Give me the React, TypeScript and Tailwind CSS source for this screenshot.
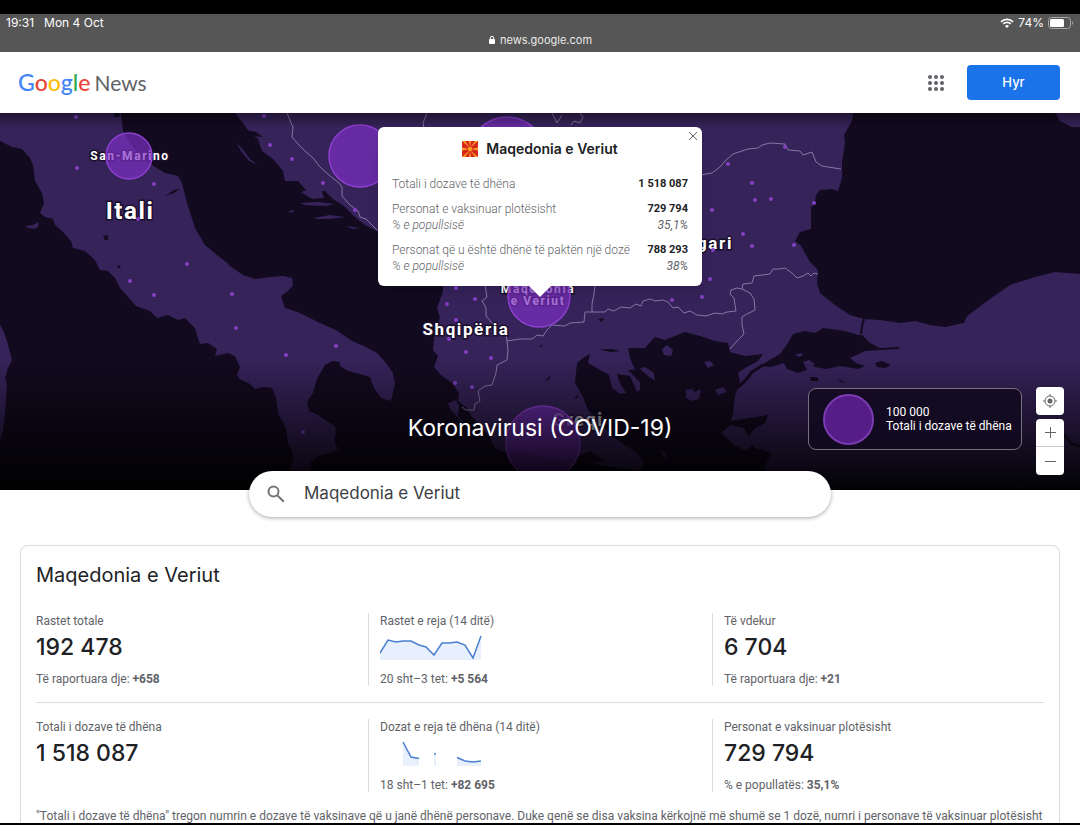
import { useState } from "react";

const LAND = "#36235a";
const SEA = "#120a1f";

const italy =
  "0,0 121,0 123,18 130,30 142,45 155,54 165,60 178,63 182,70 187,90 195,115 205,132 217,142 226,149 230,153 243,162 255,166 270,164 283,163 292,165 293,172 288,178 281,183 285,195 300,200 320,210 336,217 352,228 366,234 377,240 386,250 393,260 395,270 391,288 381,285 374,275 370,264 360,261 348,258 340,253 340,249 333,248 325,252 317,266 313,280 307,289 309,298 318,302 325,307 335,313 336,320 334,328 338,336 330,340 318,343 310,350 312,377 290,377 291,352 294,346 292,338 288,330 286,315 278,300 276,285 272,275 264,274 255,276 250,271 240,266 237,262 240,254 235,243 228,240 215,243 217,236 208,230 200,231 198,225 195,215 192,212 185,205 178,207 168,202 157,205 150,198 136,193 129,185 120,175 115,165 108,158 100,157 95,147 85,138 73,135 71,128 62,118 55,112 53,106 45,104 40,100 44,90 42,80 35,68 33,52 30,45 22,36 12,34 0,28";

const mainland =
  "235,0 243,10 250,20 258,26 262,38 273,46 283,58 285,68 298,68 305,76 313,80 325,78 333,86 345,94 355,104 365,112 378,119 400,140 443,165 443,178 437,195 440,205 435,215 433,237 438,243 434,254 441,262 452,270 459,280 458,288 467,295 472,304 480,312 490,325 495,335 505,340 520,338 545,345 580,347 600,352 640,358 644,350 637,340 613,324 600,310 588,297 583,284 575,270 577,250 583,245 590,241 588,250 600,257 609,262 612,275 620,281 626,280 620,270 617,261 630,263 637,279 640,277 640,269 628,257 640,256 648,263 655,268 654,260 645,254 635,257 630,245 628,235 645,235 650,229 655,224 665,227 675,223 685,219 700,223 715,228 728,230 730,239 745,243 763,241 758,248 745,255 738,260 740,270 738,274 735,283 733,300 731,308 750,305 768,302 765,310 754,316 748,325 755,335 772,340 766,350 760,377 1080,377 1080,161 1055,159 1035,164 1010,172 1000,179 990,186 967,203 964,210 945,214 930,212 915,208 900,210 880,207 864,206 850,202 835,192 820,180 817,170 818,157 810,149 806,142 801,133 795,128 800,119 811,116 811,95 815,88 816,82 820,77 832,76 838,78 842,65 842,50 845,30 844,22 852,8 853,0";

const marmara =
  "793,221 805,218 815,220 823,215 845,218 858,222 862,222 870,230 880,235 900,234 898,236 880,237 865,238 850,245 856,250 865,253 858,256 840,253 826,256 815,254 808,248 803,249 807,257 798,260 787,256 784,250 778,252 770,254 760,253 768,248 780,241 788,230";

const islands = [
  "0,212 3,217 7,228 12,247 8,255 5,265 7,272 5,300 3,318 0,327",
  "26,113 33,112 39,109 38,114 34,116 28,115",
  "236,29 244,38 250,46 258,52 249,48 241,38",
  "301,79 312,75 322,79 324,85 312,86 304,81",
  "300,90 318,89 335,91 325,93 305,92",
  "288,98 295,97 292,100",
  "314,105 330,102 345,104 330,106 316,106",
  "346,113 360,115 352,116",
  "448,290 456,287 459,293 458,303 464,310 459,306 450,296",
  "662,236 667,232 673,237 671,243 664,242",
  "686,277 692,276 695,279 701,276 699,286 692,288 686,285",
  "704,249 710,248 714,252 708,255",
  "715,277 723,274 727,279 718,282",
  "721,320 731,312 744,315 753,332 745,338 733,331",
  "795,242 801,240 803,242 799,244",
  "803,249 809,247 815,251 810,255",
  "660,337 665,340 668,347 663,343",
  "1055,0 1060,8 1072,14 1080,14 1080,0",
];

const lakes = [
  "103,123 108,122 108,127 105,127",
  "117,152 121,153 119,156",
  "113,0 120,0 119,4 115,4",
  "165,83 174,77 180,76 174,80",
  "245,17 256,19 263,24 252,23",
  "599,236 612,236 620,238 610,239",
  "545,268 551,262 549,267",
  "573,286 579,281 577,285",
  "540,233 543,231 541,235",
  "598,206 604,205 602,209",
  "875,250 882,248 891,252 885,255 877,254",
  "810,264 817,264 819,268 811,268",
  "838,266 846,270 841,269",
  "490,343 510,338 535,348 575,345 590,338 605,348 575,352 540,358 500,352",
];

const borders = [
  "287,0 291,10 293,14 292,24 299,32 305,38 314,46 320,54 329,62 339,70 342,74 342,83 350,92 358,98 360,104 366,106 377,117",
  "700,62 712,60 720,54 725,48 733,41 748,36 758,35 762,32 770,30 785,31 788,37 800,38 803,42 806,41 812,39 816,49 822,53 828,54 841,56",
  "818,161 814,160 811,163 808,160 803,163 797,165 792,160 785,155 780,156 773,156 770,161 754,163 752,170 743,171 742,176",
  "742,176 737,175 731,177 730,181 734,185 735,192 736,198 727,199 722,201 715,200 706,203 697,202 690,198 684,200 678,194 673,195 668,189 663,187 655,188 650,186 643,188 641,193 636,191 630,195 621,194 614,198 608,196 605,199 585,199 584,209 570,210 565,213 552,212 547,217 543,223 537,222 532,226 520,226 507,228",
  "742,176 750,180 754,186 755,197 747,201 742,204 742,212 744,221 737,228 730,236",
  "507,228 508,237 507,247 497,252 496,260 492,272 485,273 478,278 480,288 475,291 474,297 466,297 462,294",
  "485,172 487,184 482,188 486,195 486,203 493,211 495,218 506,221 507,228",
  "595,172 594,181 592,191 592,199",
  "427,0 423,10 425,20",
  "552,0 557,10 562,2",
  "571,12 574,8 580,10 583,4 580,0",
];

const dots = [
  [76, 4], [77, 55], [154, 71], [138, 106], [187, 151], [130, 168], [154, 182], [232, 181], [236, 215],
  [286, 242], [336, 233], [303, 319], [264, 3], [270, 32], [292, 46], [323, 70], [355, 97], [456, 175],
  [447, 191], [475, 186], [456, 207], [449, 226], [466, 239], [491, 245], [455, 270], [472, 274],
  [728, 51], [785, 34], [752, 70], [755, 87], [771, 86], [712, 97], [743, 121], [752, 133], [713, 137],
  [794, 132], [814, 90], [710, 166], [702, 184], [672, 187],
];

const bubbles = [
  { x: 129, y: 43, r: 23 },
  { x: 360, y: 43, r: 31 },
  { x: 507, y: 42, r: 38 },
  { x: 539, y: 183, r: 31 },
  { x: 543, y: 330, r: 37 },
];

const popupRows = [
  { label: "Totali i dozave të dhëna", value: "1 518 087" },
  { label: "Personat e vaksinuar plotësisht", value: "729 794", share: "35,1%" },
  { label: "Personat që u është dhënë të paktën një dozë", value: "788 293", share: "38%" },
];

function VaccineMap() {
  return (
    <svg
      viewBox="0 0 1080 377"
      preserveAspectRatio="xMidYMid slice"
      className="block h-full w-full"
      role="img"
      aria-label="Harta"
    >
      <defs>
        <linearGradient id="fade" x1="0" y1="0" x2="0" y2="1">
          <stop offset="0.65" stopColor="#000" stopOpacity="0" />
          <stop offset="0.8" stopColor="#000" stopOpacity="0.4" />
          <stop offset="1" stopColor="#000" stopOpacity="0.95" />
        </linearGradient>
        <linearGradient id="topShade" x1="0" y1="0" x2="0" y2="1">
          <stop offset="0" stopColor="#000" stopOpacity="0.4" />
          <stop offset="0.04" stopColor="#000" stopOpacity="0" />
        </linearGradient>
      </defs>
      <rect width="1080" height="377" fill={SEA} />
      <g fill={LAND}>
        <polygon points={italy} />
        <polygon points={mainland} />
      </g>
      <polygon points={marmara} fill={SEA} />
      <g fill={SEA}>
        {lakes.map((p) => (
          <polygon key={p} points={p} />
        ))}
      </g>
      <g fill={LAND}>
        {islands.map((p) => (
          <polygon key={p} points={p} />
        ))}
      </g>
      <polyline points="864,206 862,213 861,221" fill="none" stroke={SEA} strokeWidth="2" />
      <polyline points="763,252 752,259 745,268 737,275" fill="none" stroke={SEA} strokeWidth="3" />
      <polyline points="1064,322 1072,331 1080,333" fill="none" stroke={SEA} strokeWidth="2" />
      <g fill="none" stroke="#8377a3" strokeWidth="1" strokeLinejoin="round">
        {borders.map((p) => (
          <polyline key={p} points={p} />
        ))}
      </g>
      <g
        fill="#fff"
        stroke="#1a0f2b"
        strokeWidth="3"
        paintOrder="stroke"
        textAnchor="middle"
        className="font-[Roboto,sans-serif] font-bold tracking-widest"
      >
        <text x="130" y="47" className="text-[12px]">San-Marino</text>
        <text x="130" y="106" className="text-[24px]">Itali</text>
        <text x="466" y="222" className="text-[17px]">Shqipëria</text>
        <text x="733" y="136" textAnchor="end" className="text-[17px]">gari</text>
        <text x="538" y="180" className="text-[12px]">Maqedonia</text>
        <text x="538" y="192" className="text-[12px]">e Veriut</text>
        <text x="578" y="313" className="text-[18px]" opacity="0.7">Greqi</text>
      </g>
      <g fill="#8540c6">
        {dots.map(([x, y]) => (
          <circle key={`${x}-${y}`} cx={x} cy={y} r="2" />
        ))}
      </g>
      <g fill="#7f2fc6" fillOpacity="0.68" stroke="#8d3fd0" strokeWidth="1.5">
        {bubbles.map((b) => (
          <circle key={b.x} cx={b.x} cy={b.y} r={b.r} />
        ))}
      </g>
      <rect width="1080" height="377" fill="url(#fade)" />
      <rect width="1080" height="377" fill="url(#topShade)" />
    </svg>
  );
}

function Flag() {
  return (
    <svg viewBox="0 0 16 16" className="size-4" aria-hidden="true">
      <rect width="16" height="16" fill="#d8261c" />
      <g fill="#f7a325">
        <path d="M0 0h3l5 7zM16 0h-3L8 7zM0 16h3l5-7zM16 16h-3L8 9z" />
        <path d="M7 0h2L8 6zM7 16h2l-1-6zM0 6.500v3L7 8zM16 6.500v3L9 8z" />
        <circle cx="8" cy="8" r="2.600" stroke="#d8261c" strokeWidth="0.700" />
      </g>
    </svg>
  );
}

function MapPopup({ onClose }: { onClose: () => void }) {
  return (
    <div className="absolute top-3.5 left-1/2 w-[324px] -translate-x-1/2 rounded-md bg-white px-3.5 pb-3 shadow-lg">
      <button type="button" aria-label="Mbyll" onClick={onClose} className="absolute top-0.5 right-0.5 p-0.5 text-[#5f6368]">
        <svg viewBox="0 0 10 10" className="size-2.5" stroke="currentColor">
          <path d="M1 1l8 8M9 1l-8 8" />
        </svg>
      </button>
      <h3 className="flex items-center justify-center gap-2 pt-3 font-[Inter,sans-serif] text-[14px] leading-5 font-semibold text-[#202124]">
        <Flag />
        Maqedonia e Veriut
      </h3>
      <table className="mt-2 w-full text-[11px] leading-4">
        {popupRows.map((row) => (
          <tbody key={row.label} className="text-[#5f6368]">
            <tr>
              <th scope="row" className="pt-[9px] text-left text-[12px] leading-4 font-light">{row.label}</th>
              <td className="pt-[9px] text-right font-bold text-[#202124]">{row.value}</td>
            </tr>
            {row.share && (
              <tr className="italic">
                <th scope="row" className="text-left text-[12px] leading-4 font-light">% e popullsisë</th>
                <td className="text-right text-[12px] leading-4">{row.share}</td>
              </tr>
            )}
          </tbody>
        ))}
      </table>
      <svg viewBox="0 0 22 11" className="absolute top-full left-1/2 h-[11px] w-[22px] -translate-x-1/2" aria-hidden="true">
        <path d="M0 0h22L11 11z" fill="#fff" />
      </svg>
    </div>
  );
}

function MapControls() {
  return (
    <div className="absolute right-4 bottom-[15px] flex flex-col gap-1 text-[#666]">
      <button type="button" aria-label="Vendndodhja ime" className="flex h-7 w-7 items-center justify-center rounded-sm bg-white">
        <svg viewBox="0 0 14 14" className="size-3.5" fill="none" stroke="currentColor">
          <circle cx="7" cy="7" r="5" />
          <circle cx="7" cy="7" r="2.500" fill="currentColor" stroke="none" />
          <path d="M7 0v2M7 12v2M0 7h2M12 7h2" />
        </svg>
      </button>
      <div className="flex flex-col divide-y divide-[#ccc] rounded-sm bg-white">
        <button type="button" aria-label="Zmadho" className="flex h-7 w-7 items-center justify-center">
          <svg viewBox="0 0 11 11" className="size-[11px]" stroke="currentColor">
            <path d="M0 5.500h11M5.500 0v11" />
          </svg>
        </button>
        <button type="button" aria-label="Zvogëlo" className="flex h-7 w-7 items-center justify-center">
          <svg viewBox="0 0 11 11" className="size-[11px]" stroke="currentColor">
            <path d="M0 5.500h11" />
          </svg>
        </button>
      </div>
    </div>
  );
}

function StatusBar() {
  return (
    <div className="shrink-0 border-t-[14px] border-black bg-[#565656] px-1.5 font-[Inter,sans-serif] text-[12px] text-white">
      <div className="flex h-[18px] items-center justify-between">
        <div className="flex gap-2.5">
          <span>19:31</span>
          <span>Mon 4 Oct</span>
        </div>
        <div className="flex items-center gap-1">
          <svg viewBox="0 0 14 10" className="h-2.5 w-3.5" fill="none" stroke="#fff" strokeWidth="1.700">
            <path d="M1 3.800a8.500 8.500 0 0 1 12 0M3.200 6a5.400 5.400 0 0 1 7.600 0" />
            <path d="M5 7.900a2.900 2.900 0 0 1 4 0L7 10z" fill="#fff" stroke="none" />
          </svg>
          <span>74%</span>
          <svg viewBox="0 0 26 12" className="h-3 w-[26px]" fill="none">
            <rect x="0.500" y="0.500" width="22" height="11" rx="3" stroke="#a5a5a5" />
            <rect x="2" y="2" width="14" height="8" rx="1.500" fill="#fff" />
            <path d="M24 4.200v3.600c1.400-.5 1.400-3.100 0-3.600z" fill="#a5a5a5" />
          </svg>
        </div>
      </div>
      <div className="flex h-5 items-start justify-center gap-1 leading-4 text-[#e8e8e8]">
        <svg viewBox="0 0 8 10" className="mt-[3px] h-2.5 w-2" aria-hidden="true">
          <rect x="1" y="4" width="6" height="5" rx="1" fill="#fff" />
          <path d="M2.300 4.500V3a1.700 1.700 0 0 1 3.400 0v1.500" fill="none" stroke="#fff" />
        </svg>
        <span className="text-[11px] leading-4">news.google.com</span>
      </div>
    </div>
  );
}

function Header() {
  return (
    <header className="flex h-[61px] items-center justify-between bg-white pr-5 pl-[18px]">
      <a href="#" className="flex items-baseline gap-1 font-[Lato,sans-serif] text-[21px] leading-8 text-[#5f6368]">
        <span className="text-[23px] font-medium">
          <span className="text-[#4285f4]">G</span>
          <span className="text-[#ea4335]">o</span>
          <span className="text-[#fbbc04]">o</span>
          <span className="text-[#4285f4]">g</span>
          <span className="text-[#34a853]">l</span>
          <span className="text-[#ea4335]">e</span>
        </span>
        <span>News</span>
      </a>
      <div className="flex items-center gap-[23px]">
        <button type="button" aria-label="Aplikacionet e Google">
          <svg viewBox="0 0 16 16" className="size-4" fill="#5f6368">
            {[2, 8, 14].map((y) => [2, 8, 14].map((x) => <circle key={`${x}${y}`} cx={x} cy={y} r="2" />))}
          </svg>
        </button>
        <button type="button" className="h-[35px] w-[93px] rounded-sm bg-[#1a73e8] font-[Inter,sans-serif] text-[13px] font-medium text-white">
          Hyr
        </button>
      </div>
    </header>
  );
}

function Stat({ label, value, note, noteValue, chart }: {
  label: string;
  value?: string;
  note?: string;
  noteValue?: string;
  chart?: React.ReactNode;
}) {
  return (
    <div className="h-[73px] border-l border-[#dadce0] px-[11px] first:border-transparent">
      <h3 className="leading-4">{label}</h3>
      <div className="mt-0.5 flex h-8 items-center font-[Inter,sans-serif] text-[23px] leading-8 font-medium text-[#202124]">
        {chart ?? value}
      </div>
      {note && (
        <p className="pt-2 leading-4">
          {note} <b className="font-bold">{noteValue}</b>
        </p>
      )}
    </div>
  );
}

function CasesChart() {
  const line = "0,18 8,5 16,7 23,6 31,6 39,10 46,12 54,20 62,8 69,8 77,7 85,10 93,23 101,1";
  return (
    <svg viewBox="0 0 102 25" className="h-[25px] w-[102px]" fill="none">
      <polygon points={`0,25 ${line} 101,25`} fill="#e8f0fe" />
      <polyline points={line} stroke="#4a7fd0" strokeWidth="1.500" />
    </svg>
  );
}

function DosesChart() {
  return (
    <svg viewBox="0 0 102 25" className="h-[25px] w-[102px]" fill="none">
      <g fill="#e8f0fe">
        <path d="M23 25V1l8 15 8 1v8zM54 13h2v12h-2zM77 25v-8l8 3 8 1 8-1v5z" />
      </g>
      <g stroke="#4a7fd0" strokeWidth="1.500">
        <path d="M23 1l8 15 8 1.500M77 16.500l8 3.500 8 1 8-1" />
        <path d="M54 13h2" />
      </g>
    </svg>
  );
}

export default function App() {
  const [query, setQuery] = useState("Maqedonia e Veriut");
  const [popupOpen, setPopupOpen] = useState(true);

  return (
    <div className="flex h-screen flex-col bg-white font-[Roboto,sans-serif] text-[#5f6368]">
      <StatusBar />
      <div className="min-h-0 flex-1 overflow-y-auto [scrollbar-width:none]">
        <Header />

        {/* Map */}
        <section className="relative h-[377px] bg-black">
          <VaccineMap />
          <h1 className="absolute inset-x-0 bottom-[46px] text-center font-[Inter,sans-serif] text-[23px] leading-8 text-white">
            Koronavirusi (COVID-19)
          </h1>
          {popupOpen && <MapPopup onClose={() => setPopupOpen(false)} />}
          <div className="absolute right-[58px] bottom-10 flex h-[62px] w-[214px] items-center gap-3 rounded-lg border border-[#77717f] bg-[#120a1f]/90 pl-3.5 text-[12px] leading-[14px] text-white">
            <span className="size-[51px] rounded-full border-2 border-[#7a3bb3] bg-[#561c87]" />
            <p>
              100 000
              <br />
              Totali i dozave të dhëna
            </p>
          </div>
          <MapControls />
        </section>

        {/* Search */}
        <form
          role="search"
          onSubmit={(e) => e.preventDefault()}
          className="relative mx-auto -mt-[19px] flex h-[46px] w-[582px] max-w-full items-center gap-[19px] rounded-full bg-white pl-[18px] shadow-[0_1px_4px_rgba(0,0,0,0.35)]"
        >
          <svg viewBox="0 0 18 18" className="size-[18px]" fill="none" stroke="#757575" strokeWidth="2" aria-hidden="true">
            <circle cx="6.500" cy="6.500" r="5" />
            <path d="M10.500 10.500l6.300 6.300" />
          </svg>
          <input
            type="text"
            aria-label="Kërko një vendndodhje"
            value={query}
            onChange={(e) => setQuery(e.target.value)}
            className="min-w-0 flex-1 font-[Inter,sans-serif] text-[17px] text-[#3c4043] outline-none"
          />
        </form>

        {/* Country summary */}
        <section className="mx-5 mt-7 rounded-t-lg border border-b-0 border-[#dadce0] px-[15px] pt-[13px] text-[12px]">
          <h2 className="font-[Inter,sans-serif] text-[20px] leading-8 text-[#202124]">Maqedonia e Veriut</h2>
          <div className="-mx-3 mt-[22px] grid grid-cols-3">
            <Stat label="Rastet totale" value="192 478" note="Të raportuara dje:" noteValue="+658" />
            <Stat label="Rastet e reja (14 ditë)" chart={<CasesChart />} note="20 sht–3 tet:" noteValue="+5 564" />
            <Stat label="Të vdekur" value="6 704" note="Të raportuara dje:" noteValue="+21" />
          </div>
          <hr className="my-4 border-[#dadce0]" />
          <div className="-mx-3 grid grid-cols-3">
            <Stat label="Totali i dozave të dhëna" value="1 518 087" />
            <Stat label="Dozat e reja të dhëna (14 ditë)" chart={<DosesChart />} note="18 sht–1 tet:" noteValue="+82 695" />
            <Stat label="Personat e vaksinuar plotësisht" value="729 794" note="% e popullatës:" noteValue="35,1%" />
          </div>
          <p className="mt-4 leading-4">
            "Totali i dozave të dhëna" tregon numrin e dozave të vaksinave që u janë dhënë personave. Duke qenë se disa
            vaksina kërkojnë më shumë se 1 dozë, numri i personave të vaksinuar plotësisht
          </p>
        </section>
      </div>
      <div className="h-0.5 shrink-0 bg-black" />
    </div>
  );
}
